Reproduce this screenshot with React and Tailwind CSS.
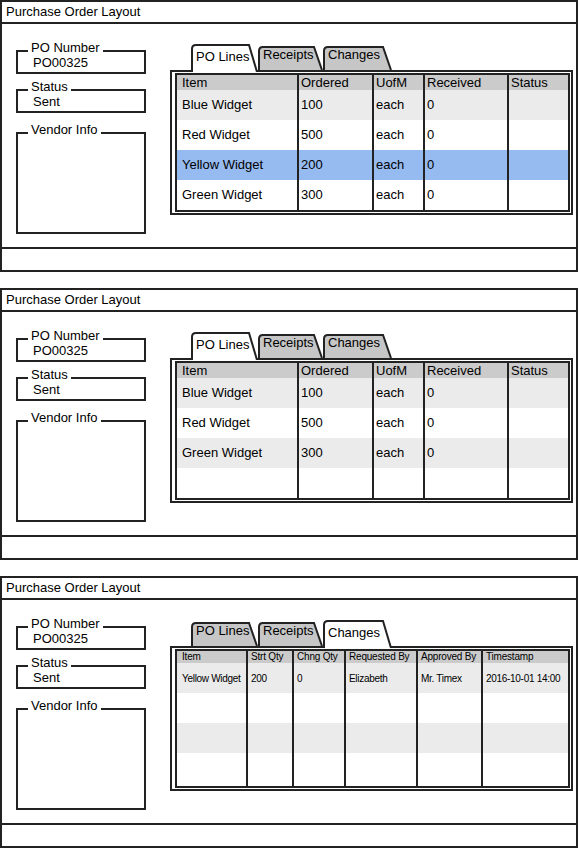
const tabs = [
  { label: 'PO Lines', w: 67, cls: 'w-[67px]' },
  { label: 'Receipts', w: 65, cls: 'w-[65px]' },
  { label: 'Changes', w: 69, cls: 'w-[69px]' },
]

const linesCols = 'grid-cols-[122px_75px_51px_84px_59px]'
const changesCols = 'grid-cols-[71px_46px_52px_72px_65px_85px]'

const linesHead = ['Item', 'Ordered', 'UofM', 'Received', 'Status']
const changesHead = ['Item', 'Strt Qty', 'Chng Qty', 'Requested By', 'Approved By', 'Timestamp']

const allLines = [
  ['Blue Widget', '100', 'each', '0', ''],
  ['Red Widget', '500', 'each', '0', ''],
  ['Yellow Widget', '200', 'each', '0', ''],
  ['Green Widget', '300', 'each', '0', ''],
]

const lessLines = [
  ['Blue Widget', '100', 'each', '0', ''],
  ['Red Widget', '500', 'each', '0', ''],
  ['Green Widget', '300', 'each', '0', ''],
  ['', '', '', '', ''],
]

const changes = [
  ['Yellow Widget', '200', '0', 'Elizabeth', 'Mr. Timex', '2016-10-01 14:00'],
  ['', '', '', '', '', ''],
  ['', '', '', '', '', ''],
  ['', '', '', '', '', ''],
]

function Tab({ label, active, w, cls }) {
  const h = active ? 28 : 24
  return (
    <div className={`relative shrink-0 ${cls} ${active ? 'z-10 -mb-[2px] h-[28px] pt-[5px]' : 'h-[24px] pt-[1px]'}`}>
      <svg className="absolute inset-0" width={w} height={h}>
        <path
          d={`M1 ${h} V5 Q1 1 5 1 H${w - 9} L${w - 1} ${h}`}
          fill={active ? '#ffffff' : '#c6c6c6'}
          stroke="#222"
          strokeWidth="2"
        />
      </svg>
      <span className="relative block pl-[5px] text-[13px] leading-[16px]">{label}</span>
    </div>
  )
}

function Field({ label, value, className = '' }) {
  return (
    <div className={`relative border-2 border-[#222] ${className}`}>
      <span className="absolute -top-[12px] left-[10px] bg-white px-[3px] text-[13px] leading-[16px]">{label}</span>
      {value && <div className="pl-[15px] pt-[3px] text-[13px] leading-[16px]">{value}</div>}
    </div>
  )
}

function Grid({ cols, head, rows, selected, small }) {
  const pad = small ? 'pl-[3px]' : 'pl-[2px]'
  return (
    <div className={`grid ${cols} border-2 border-[#222]`}>
      {head.map((h, c) => (
        <div
          key={'h' + c}
          className={`bg-[#cbcbcb] ${c === 0 ? 'pl-[5px]' : pad} ${c < head.length - 1 ? 'border-r-2 border-[#222]' : ''} ${small ? 'h-[12px] text-[10px] leading-[12px] tracking-[-0.2px]' : 'h-[15px] text-[13px] leading-[15px]'}`}
        >
          {h}
        </div>
      ))}
      {rows.map((r, i) =>
        r.map((v, c) => (
          <div
            key={i + '-' + c}
            className={`flex h-[30px] items-center whitespace-nowrap ${i === selected ? 'bg-[#96bbf0]' : i % 2 === 0 ? 'bg-[#ebebeb]' : 'bg-white'} ${c === 0 ? 'pl-[5px]' : pad} ${c < r.length - 1 ? 'border-r-2 border-[#222]' : ''} ${small ? 'text-[10px] tracking-[-0.3px]' : 'text-[13px]'}`}
          >
            {v}
          </div>
        ))
      )}
      {small &&
        head.map((_, c) => (
          <div key={'f' + c} className={`h-[3px] ${c < head.length - 1 ? 'border-r-2 border-[#222]' : ''}`} />
        ))}
    </div>
  )
}

function Panel({ activeTab, children }) {
  return (
    <div className="flex h-[272px] w-[578px] flex-col border-2 border-[#222] bg-white">
      <div className="h-[22px] border-b-2 border-[#222] pl-[4px] text-[13px] leading-[20px]">Purchase Order Layout</div>
      <div className="flex h-[223px] shrink-0">
        <div className="ml-[14px] flex w-[130px] flex-col pt-[26px]">
          <Field label="PO Number" value="PO00325" className="h-[24px]" />
          <Field label="Status" value="Sent" className="mt-[15px] h-[24px]" />
          <Field label="Vendor Info" className="mt-[19px] h-[102px]" />
        </div>
        <div className="ml-[24px] flex w-[403px] flex-col pt-[20px]">
          <div className="ml-[21px] flex items-end">
            {tabs.map((t) => (
              <Tab key={t.label} {...t} active={t.label === activeTab} />
            ))}
          </div>
          <div className="border-2 border-[#222] pb-[1px] pl-[3px] pr-[1px] pt-[1px]">{children}</div>
        </div>
      </div>
      <div className="flex-1 border-t-2 border-[#222]" />
    </div>
  )
}

export default function App() {
  return (
    <div className="flex min-h-[848px] w-[581px] flex-col gap-[16px] bg-white font-['Liberation_Sans',Arial,sans-serif] text-black">
      <Panel activeTab="PO Lines">
        <Grid cols={linesCols} head={linesHead} rows={allLines} selected={2} />
      </Panel>
      <Panel activeTab="PO Lines">
        <Grid cols={linesCols} head={linesHead} rows={lessLines} selected={-1} />
      </Panel>
      <Panel activeTab="Changes">
        <Grid cols={changesCols} head={changesHead} rows={changes} selected={-1} small />
      </Panel>
    </div>
  )
}
